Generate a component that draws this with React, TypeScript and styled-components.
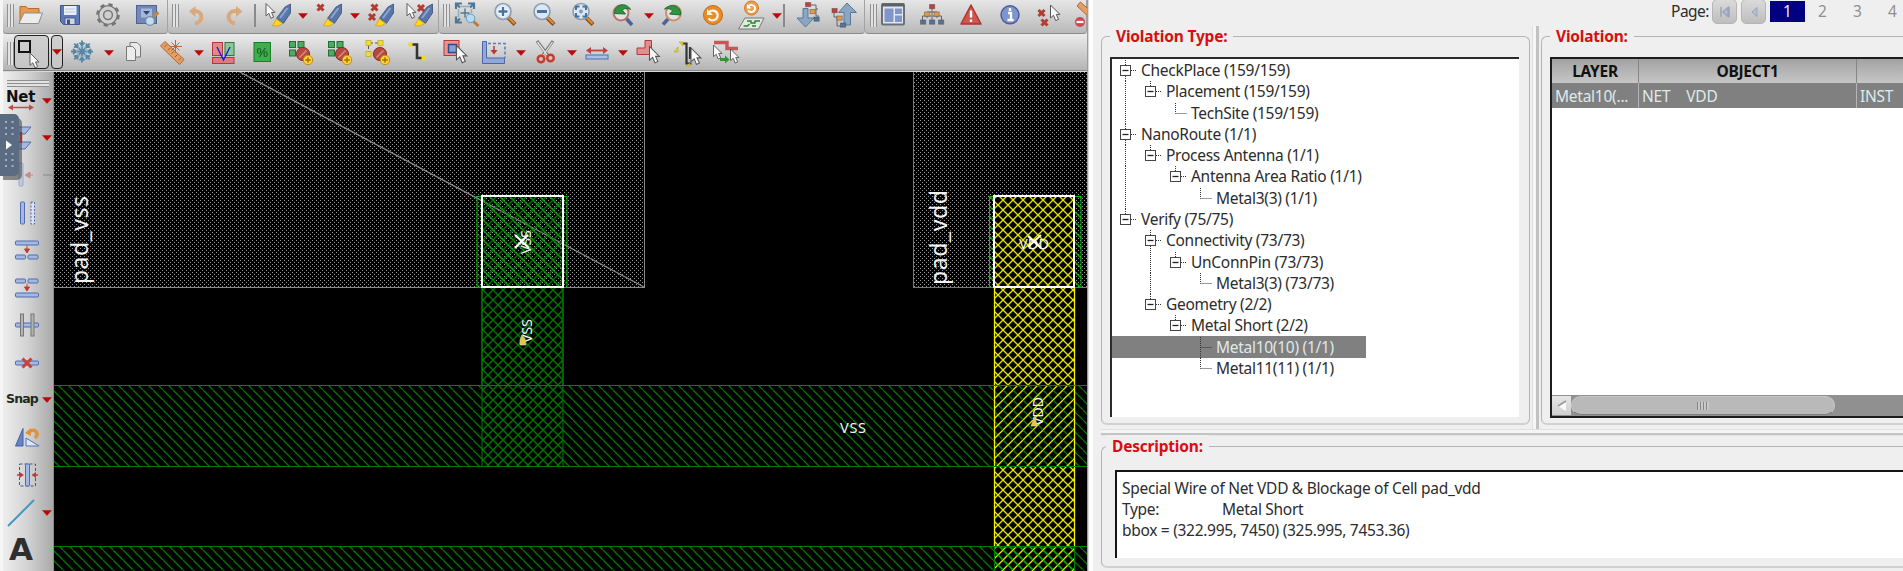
import React from "react";
import styled, { createGlobalStyle } from "styled-components";

const Global = createGlobalStyle`
  *, *::before, *::after { box-sizing: border-box; }
  body { margin: 0; background: #efefef; overflow: hidden; font-family: "Noto Sans", "Open Sans", sans-serif; font-size: 16px; color: #2c2c2c; }
  svg { display: block; overflow: visible; flex: none; }
`;

const Window = styled.div`
  display: flex;
  width: 1903px;
  height: 571px;
  overflow: hidden;
`;
const Editor = styled.div`
  position: relative;
  display: flex;
  flex: none;
  flex-direction: column;
  width: 1087px;
  height: 571px;
  padding-left: 3px;
  overflow: hidden;
  background: #f6f6f6;
`;
const ToolRow = styled.div<{ $h: number }>`
  display: flex;
  flex: none;
  height: ${(p) => p.$h}px;
  background: #d8d8d8;
`;
const ToolGroup = styled.div<{ $w: number; $pad?: number }>`
  display: flex;
  flex: none;
  align-items: flex-start;
  width: ${(p) => p.$w}px;
  height: 34px;
  padding: 1px 0 0 ${(p) => p.$pad ?? 4}px;
  background: linear-gradient(#e6e6e6, #d2d2d2 45%, #b9b9b9);
  border-bottom: 1px solid #8b8b8b;
  border-right: 1px solid #a2a2a2;
  border-radius: 0 0 4px 4px;
`;
const ToolBand = styled.div`
  display: flex;
  width: 1084px;
  height: 37px;
  padding: 4px 0 0 4px;
  background: linear-gradient(#ebebeb, #d6d6d6 40%, #b4b4b4);
  border-bottom: 1px solid #8a8a8a;
`;
const Handle = styled.div<{ $top: number }>`
  flex: none;
  width: 7px;
  height: 23px;
  margin-top: ${(p) => p.$top}px;
  background: repeating-linear-gradient(90deg, #919191 0 1px, #e3e3e3 1px 3px);
`;
const Slot = styled.div<{ $gap: number; $w?: number; $top?: number }>`
  flex: none;
  width: ${(p) => p.$w ?? 28}px;
  margin-left: ${(p) => p.$gap}px;
  margin-top: ${(p) => p.$top ?? 0}px;
`;
const Divider = styled.div<{ $gap: number }>`
  width: 2px;
  height: 23px;
  margin: 3px 0 0 ${(p) => p.$gap}px;
  background: #8a8a8a;
`;
const PressedButton = styled.div<{ $w: number; $gap?: number }>`
  display: flex;
  align-items: center;
  justify-content: center;
  flex: none;
  width: ${(p) => p.$w}px;
  height: 34px;
  margin: -3px 0 0 ${(p) => p.$gap ?? 0}px;
  border: 1px solid #222;
  border-radius: 4px;
  background: linear-gradient(#cfcfcf, #c6c6c6);
`;
const Body = styled.div`
  display: flex;
  flex: 1;
`;
const SideBar = styled.div`
  display: flex;
  flex: none;
  flex-direction: column;
  width: 51px;
  padding: 8px 0 0 4px;
  background: linear-gradient(90deg, #eeeeee, #d2d2d2 50%, #a9a9a9);
  border-right: 1px solid #8d8d8d;
`;
const SideHandle = styled.div`
  width: 42px;
  height: 7px;
  background: repeating-linear-gradient(#8f8f8f 0 1px, #e3e3e3 1px 3px);
`;
const SideItem = styled.div<{ $h: number }>`
  display: flex;
  align-items: center;
  justify-content: space-between;
  flex: none;
  width: 45px;
  height: ${(p) => p.$h}px;
`;
const SnapLabel = styled.span`
  font: bold 12.5px/1 "DejaVu Sans", sans-serif;
  letter-spacing: -0.85px;
  margin-left: -1px;
  color: #1d2a1d;
`;
const NetBlock = styled.div`
  font: bold 15px/13px "DejaVu Sans", sans-serif;
  letter-spacing: -0.2px;
  margin-left: -1px;
  color: #111;
`;
const LetterA = styled.span`
  font: bold 31px/28px "DejaVu Sans", sans-serif;
  color: #2e2e2e;
  margin: -3px 0 0 2px;
`;
const PullTab = styled.div`
  position: absolute;
  left: 0;
  top: 114px;
  width: 19px;
  height: 62px;
  border-radius: 0 5px 5px 0;
  background: #5a6b82;
  box-shadow: 3px 4px 0 rgba(70, 70, 70, 0.6);
`;

const Side = styled.div`
  display: flex;
  flex-direction: column;
  flex: 1;
  min-width: 0;
  border-left: 1px solid #9c9c9c;
  background: linear-gradient(90deg, #d9d9d9 0 1px, #fdfdfd 1px 5px, #efefef 5px);
  padding-left: 13px;
`;
const Pager = styled.div`
  display: flex;
  flex: none;
  height: 26px;
  padding-left: 570px;
  font-size: 15.5px;
  color: #8b8b8b;
`;
const PagerLabel = styled.span`
  flex: none;
  width: 41px;
  line-height: 23px;
  letter-spacing: -0.5px;
  color: #2c2c2c;
`;
const PagerButton = styled.div`
  display: flex;
  align-items: center;
  justify-content: center;
  flex: none;
  width: 25px;
  height: 25px;
  margin: -1px 4px 0 0;
  border: 1px solid #b5b5b5;
  border-radius: 5px;
  background: linear-gradient(#dadada, #bebebe);
`;
const PageNo = styled.span<{ $on?: boolean }>`
  width: 35px;
  height: 21px;
  margin-top: 1px;
  flex: none;
  line-height: 21px;
  text-align: center;
  color: ${(p) => (p.$on ? "#e8eef4" : "#8f8f8f")};
  background: ${(p) => (p.$on ? "#000080" : "transparent")};
`;
const Columns = styled.div`
  display: flex;
  flex: none;
  height: 403px;
`;
const Group = styled.section<{ $w?: number; $h: number; $pad: string; $open?: boolean }>`
  position: relative;
  flex: none;
  width: ${(p) => (p.$w ? `${p.$w}px` : "auto")};
  height: ${(p) => p.$h}px;
  margin-top: 10px;
  padding: ${(p) => p.$pad};
  border: 1px solid #b4b4b4;
  border-bottom: 2px solid #d0d0d0;
  border-right-width: ${(p) => (p.$open ? 0 : 1)}px;
  border-radius: ${(p) => (p.$open ? "6px 0 0 6px" : "6px")};
`;
const GroupTitle = styled.h2<{ $left: number }>`
  position: absolute;
  left: ${(p) => p.$left}px;
  top: -12px;
  margin: 0;
  padding: 0 6px;
  font-size: 15.5px;
  line-height: 23px;
  font-weight: 700;
  letter-spacing: -0.2px;
  white-space: nowrap;
  color: #d60e12;
  background: #efefef;
`;
const VSplit = styled.div`
  flex: none;
  width: 11px;
  background: linear-gradient(90deg, #efefef 0 2px, #e0e0e0 2px 3px, #f6f6f6 3px 6px, #c2c2c2 6px 9px, #efefef 9px);
`;
const HSplit = styled.div`
  flex: none;
  height: 7px;
  background: linear-gradient(#e0e0e0 0 1px, #f5f5f5 1px 4px, #c4c4c4 4px 6px, #e4e4e4 6px);
`;
const Tree = styled.div`
  width: 409px;
  height: 360px;
  padding-top: 1px;
  border-top: 2px solid #2b2b2b;
  border-left: 2px solid #2b2b2b;
  background: #fff;
`;
const TreeRow = styled.div<{ $on?: boolean }>`
  display: flex;
  align-items: center;
  width: 254px;
  height: 21.27px;
  padding-left: 1px;
  color: ${(p) => (p.$on ? "#deeaea" : "#2c2c2c")};
  background: ${(p) => (p.$on ? "#808080" : "transparent")};
`;
const TreeText = styled.span`
  margin-left: 3px;
  line-height: 21px;
  font-size: 15.5px;
  letter-spacing: -0.28px;
  white-space: nowrap;
`;
const Table = styled.div`
  display: flex;
  flex-direction: column;
  height: 361px;
  border: 2px solid #1c1c1c;
  border-right: 0;
  background: #fff;
  overflow: hidden;
`;
const HeaderRow = styled.div`
  display: flex;
  height: 24px;
  background: linear-gradient(#a2a2a2, #c6c6c6);
`;
const HeaderCell = styled.div<{ $w: number }>`
  flex: none;
  width: ${(p) => p.$w}px;
  height: 24px;
  text-align: center;
  font-size: 15.5px;
  font-weight: 700;
  letter-spacing: -0.3px;
  line-height: 24px;
  color: #111;
  border-right: 1px solid #858585;
`;
const DataRow = styled.div`
  display: flex;
  height: 25px;
  background: #808080;
`;
const DataCell = styled.div<{ $w: number }>`
  flex: none;
  display: flex;
  gap: 16px;
  width: ${(p) => p.$w}px;
  padding-left: 3px;
  overflow: hidden;
  white-space: nowrap;
  font-size: 15.5px;
  letter-spacing: -0.25px;
  line-height: 26px;
  color: #deeaea;
  border-right: 1px solid #b5b5b5;
`;
const ScrollBar = styled.div`
  display: flex;
  margin-top: auto;
  height: 21px;
  padding-top: 1px;
  background: #909090;
`;
const ScrollButton = styled.div`
  display: flex;
  flex: none;
  align-items: center;
  justify-content: center;
  width: 19px;
  height: 19px;
  background: linear-gradient(#e6e6e6, #cfcfcf);
`;
const Thumb = styled.div`
  display: flex;
  flex: none;
  align-items: center;
  justify-content: center;
  width: 264px;
  height: 19px;
  border: 1px solid #c6c6c6;
  border-bottom-color: #7e7e7e;
  border-radius: 10px;
  background: #b9b9b9;
`;
const Grip = styled.div`
  width: 12px;
  height: 8px;
  background: repeating-linear-gradient(90deg, #868686 0 1px, #c9c9c9 1px 3px);
`;
const Report = styled.div`
  display: grid;
  grid-template-columns: 100px 1fr;
  align-content: start;
  height: 88px;
  padding: 6px 0 0 5px;
  border-top: 2px solid #141414;
  border-left: 2px solid #141414;
  background: #fff;
  font-size: 15.5px;
  letter-spacing: -0.3px;
  line-height: 21.2px;
  white-space: nowrap;
`;
const Wide = styled.div`
  grid-column: 1 / 3;
`;

/* ---------- toolbar glyphs ---------- */

const Icon = ({ children, w = 28, h = 28 }: { children: React.ReactNode; w?: number; h?: number }) => (
  <svg width={w} height={h} viewBox={`0 0 ${w} ${h}`} fill="none">{children}</svg>
);
const Caret = () => <Icon w={10} h={6}><path d="M0.5 0.5h9L5 5.5z" fill="#c80000" stroke="#8f1010" strokeWidth=".4" /></Icon>;
const Cursor = ({ x, y, s = 1 }: { x: number; y: number; s?: number }) => (
  <path transform={`translate(${x} ${y}) scale(${s})`} d="M0 0V13L3 10.3 5.2 15.6 8 14.3 5.8 9.4H9.4z" fill="#fafafa" stroke="#555" strokeWidth="1" />
);
const Cross = ({ x, y, r = 3 }: { x: number; y: number; r?: number }) => (
  <path d={`M${x - r} ${y - r}L${x + r} ${y + r}M${x + r} ${y - r}L${x - r} ${y + r}`} stroke="#b23c32" strokeWidth="3" />
);
const Pen = () => (
  <g>
    <path d="M26.5 3V12L19.5 22.3 12.5 17.3 21 6z" fill="#5876a8" stroke="#3a4f78" strokeWidth=".8" />
    <path d="M23.5 7L16 17" stroke="#8ba7cf" strokeWidth="2" />
    <path d="M12.5 18L18.5 22.6 14 25 8.5 24.7z" fill="#ffd91a" stroke="#d79a10" strokeWidth=".8" />
  </g>
);
const Lens = ({ children }: { children?: React.ReactNode }) => (
  <g>
    <path d="M16.5 16L24 23.5" stroke="#8d4d12" strokeWidth="4" />
    <path d="M17 16L23.5 22.5" stroke="#de9038" strokeWidth="2" />
    <circle cx="12" cy="10.5" r="8" fill="#dbe7f2" stroke="#8d9eb0" strokeWidth="1.6" />
    {children}
  </g>
);
const Forbid = ({ x, y }: { x: number; y: number }) => (
  <g>
    <circle cx={x} cy={y} r="6.6" fill="#b5493f" stroke="#87302a" />
    <path d={`M${x - 3.5} ${y + 3.5}L${x + 3.5} ${y - 3.5}`} stroke="#d98a80" strokeWidth="1.6" />
    <circle cx={x + 5} cy={y + 6} r="4.7" fill="#ffd43a" stroke="#c58a10" />
    <path d={`M${x + 2.2} ${y + 6}h5.6M${x + 5} ${y + 3.2}v5.6`} stroke="#a86a00" strokeWidth="1.4" />
  </g>
);
const GreenTiles = () => (
  <g fill="#4faa62" stroke="#1f7035" strokeWidth="1">
    <rect x="2.5" y="3.5" width="6" height="6" /><rect x="11" y="3.5" width="6" height="6" />
    <rect x="2.5" y="12" width="6" height="6" />
  </g>
);
const Nodes = ({ pts }: { pts: [number, number, string][] }) => (
  <g>{pts.map(([x, y, c], i) => <rect key={i} x={x} y={y} width="5.2" height="4.2" fill={c} stroke="#444" strokeOpacity=".45" strokeWidth="1" />)}</g>
);
const Ruler = () => (
  <g>
    <path d="M2.5 8L7 3.5 26 21.5 21.5 26.5z" fill="#e2a067" stroke="#b5662a" />
    <path d="M6.5 9l2.5-2.5M10 12.3l2.3-2.3M13.5 15.7l2.3-2.3M17 19l2.3-2.3M20.4 22.4l2.3-2.3" stroke="#a0521c" />
  </g>
);

const Folder = () => <Icon>
  <path d="M4 22V5.5h6l2 2h11V12" fill="#e69a4f" stroke="#b86a26" />
  <path d="M3 22.5L8 12h18.5L22.5 22.5z" fill="#ececec" stroke="#8e8e8e" />
</Icon>;
const Save = () => <Icon>
  <path d="M4.5 4.5h19v19h-16l-3-3z" fill="#5c79b8" stroke="#3e5488" />
  <rect x="8" y="5" width="12.5" height="9" fill="#eaf0f8" /><path d="M9 8h10M9 11h10" stroke="#b9c6da" />
  <rect x="9" y="17" width="10" height="6.5" fill="#cfd6e2" stroke="#41547e" strokeWidth=".8" /><rect x="11" y="18.5" width="3" height="5" fill="#3e5488" />
</Icon>;
const Gear = () => <Icon>
  <circle cx="14" cy="14" r="9.8" stroke="#747474" strokeWidth="4" strokeDasharray="4 3.7" />
  <circle cx="14" cy="14" r="6.8" stroke="#d2d2d2" strokeWidth="5" /><circle cx="14" cy="14" r="9.3" stroke="#777" strokeWidth="1.3" />
  <circle cx="14" cy="14" r="4.4" stroke="#777" strokeWidth="1.5" fill="#cfcfcf" />
</Icon>;
const DesignBrowser = () => <Icon>
  <rect x="3.5" y="4.5" width="20" height="18" fill="#7188b8" stroke="#50648f" /><rect x="8" y="7.5" width="11" height="9" fill="#a6b8da" />
  <path d="M10 10l3.500 4 3.500-4z" fill="#2f4475" /><path d="M20 15.500l5.500-4" stroke="#c3853a" strokeWidth="3" />
  <circle cx="17" cy="20" r="4.400" fill="#c4dcee" stroke="#6f8fae" strokeWidth="1.300" />
</Icon>;
const Undo = () => <Icon><path d="M12 22.500c8-1 9-12 0-12.500H8" stroke="#d9a97c" strokeWidth="4" /><path d="M6 10.500L12.500 5v11z" fill="#d9a97c" /></Icon>;
const Redo = () => <Icon><path d="M14 22.500c-8-1-9-12 0-12.500H19" stroke="#d9a97c" strokeWidth="4" /><path d="M21.500 10.500L15 5v11z" fill="#d9a97c" /></Icon>;
const CursorPen = () => <Icon><Pen /><Cursor x={2} y={2.500} s={0.95} /></Icon>;
const CrossPen = () => <Icon><Pen /><Cross x={5.500} y={6.500} /></Icon>;
const CrossesPen = () => <Icon><Pen /><Cross x={7.500} y={6.500} /><Cross x={5} y={16} /></Icon>;
const CursorCrossPen = () => <Icon><Pen /><Cross x={15} y={7} /><Cursor x={1} y={2.500} s={0.95} /></Icon>;
const FitAll = () => <Icon>
  <path d="M3 8V2.500h6M15 2.500h6V8M3 15.500V21.500h6M3 2.500l4 4M21 2.500l-4 4M3 21.500l4-4" stroke="#4c7795" strokeWidth="2.200" />
  <path d="M8 5.500h8M5.500 8v8M18.500 8v4" stroke="#8eabc0" strokeWidth="1.500" />
  <path d="M12 7.500v9M7.500 12h9" stroke="#4c7795" strokeWidth="1.400" />
  <path d="M20.500 20.500l5 4.500" stroke="#c07a30" strokeWidth="3" /><circle cx="17.500" cy="17.300" r="4.300" fill="#b6dcf4" stroke="#6a98bb" />
</Icon>;
const ZoomIn = () => <Icon><Lens><path d="M12 5.500v10M7 10.500h10" stroke="#fff" strokeWidth="4.600" /><path d="M12 6v9M7.500 10.500h9" stroke="#4772a0" strokeWidth="2.400" /></Lens></Icon>;
const ZoomOut = () => <Icon><Lens><path d="M7 10.500h10" stroke="#4772a0" strokeWidth="3" /></Lens></Icon>;
const ZoomFit = () => <Icon><Lens><path d="M7 9V5.500h3.500M13.500 5.500H17V9M7 12v3.500h3.500M13.500 15.500H17V12" stroke="#4772a0" strokeWidth="2" /><circle cx="12" cy="10.500" r="2" fill="#7d9ebe" /></Lens></Icon>;
const ZoomPrev = () => <Icon>
  <path d="M16 16L23 24" stroke="#4a6597" strokeWidth="3.500" /><circle cx="12" cy="12" r="7.500" fill="#e6dfe4" stroke="#b77868" strokeWidth="2" />
  <path d="M5.500 12.500c0-10 12-11.500 16-4-4-2-7-1-8 1l3 3.500z" fill="#2f9442" stroke="#1d6e2d" />
</Icon>;
const ZoomNext = () => <Icon>
  <path d="M10 17L4 23.500" stroke="#4a6597" strokeWidth="3.500" /><circle cx="14.500" cy="12" r="7.500" fill="#e6dfe4" stroke="#c9936a" strokeWidth="2" />
  <path d="M21.500 14c1-10-10-12-16-6 4-1 7 0 8 2l-3 3z" fill="#2f9442" stroke="#1d6e2d" />
</Icon>;
const Refresh = () => <Icon><circle cx="14" cy="14" r="9.500" fill="#e98c25" stroke="#c46b12" /><path d="M9.500 17.500c4 4 10 1 9-4.500-1.500-4-6-4-8.500-2" stroke="#fff2df" strokeWidth="2.300" /><path d="M8 8v6h6z" fill="#fff2df" /></Icon>;
const Redraw = () => <Icon>
  <path d="M8 17H27L21.500 28H1.500z" fill="#e5e8e5" stroke="#777" /><path d="M10 20h4v2h4v-2h5M6.500 25h4l2-2M15 25h4" stroke="#24852f" strokeWidth="1.400" />
  <circle cx="14.500" cy="7" r="7" fill="#eba04c" stroke="#cb792a" /><path d="M11 9.500c3 3 7.500 1 7-3-1-3-4.500-3-6.500-1.500" stroke="#fff" strokeWidth="1.800" /><path d="M10 3v4.500h4.500z" fill="#fff" />
</Icon>;
const HierDown = () => <Icon>
  <path d="M17 4h5v11h3M22 8h2" stroke="#666" /><path d="M9 7.500h5V17h6L11.500 26 3 17h6z" fill="#8aa6c4" stroke="#5a7896" />
  <Nodes pts={[[11.500, 1.500, "#c33d3d"], [16, 8.500, "#e79a45"], [20, 16, "#4f759c"]]} />
</Icon>;
const HierUp = () => <Icon>
  <path d="M4 10v6h4M7 16v9h4" stroke="#666" /><path d="M14 24.500V12H8.500L17 2.500 26.500 12h-6v12.500z" transform="translate(0,-.5)" fill="#8aa6c4" stroke="#5a7896" />
  <Nodes pts={[[2, 7.500, "#c33d3d"], [7, 15, "#e79a45"], [10.500, 22, "#4f759c"]]} />
</Icon>;
const Layout = () => <Icon>
  <rect x="3" y="3" width="22" height="20.500" rx="1" fill="#e4e6ea" stroke="#68717b" strokeWidth="2" /><path d="M3 4h22" stroke="#5a636d" strokeWidth="3" />
  <rect x="5.500" y="7.500" width="9" height="13.500" fill="#8095c9" /><rect x="16" y="7.500" width="7" height="5.500" fill="#8095c9" /><rect x="16" y="14.500" width="7" height="6.500" fill="#8095c9" />
</Icon>;
const TreeIcon = () => <Icon>
  <path d="M14 6v14M9 17v-6h10v6M4.500 20v-5h9M23.500 20v-5h-9" stroke="#666" />
  <Nodes pts={[[11.500, 3.500, "#c33d3d"], [6.500, 11, "#e79a45"], [16, 11, "#e79a45"], [2.500, 19, "#4f759c"], [11.500, 19, "#4f759c"], [20.500, 19, "#4f759c"]]} />
</Icon>;
const Warn = () => <Icon><path d="M14 4L24 23H4z" fill="#cf5550" stroke="#a93630" strokeWidth="1.500" strokeLinejoin="round" /><path d="M14 9.500v7M14 18.500v2.500" stroke="#fff" strokeWidth="2.400" /></Icon>;
const Info = () => <Icon><circle cx="14" cy="13.800" r="9" fill="#7f95cf" stroke="#4a5c9c" strokeWidth="1.500" /><path d="M14 7v3M12 12h3v7M11.500 19h6" stroke="#fff" strokeWidth="2.300" /></Icon>;
const ClearSel = () => <Icon><Cross x={6.500} y={12} /><Cross x={9.500} y={21.500} /><Cursor x={15.500} y={4} s={1} /></Icon>;
const RulerMinus = () => <Icon><path d="M10 5l3.500-4 12 11-3.500 4z" fill="#e2a067" stroke="#b5662a" /><circle cx="13" cy="21" r="5" fill="#cf4a50" /><path d="M9.500 21h7" stroke="#fff" strokeWidth="2.200" /></Icon>;

const SelectIcon = () => <Icon w={33} h={32}><rect x="4" y="5" width="11" height="11" stroke="#111" strokeWidth="2" /><Cursor x={15} y={17} s={0.95} /></Icon>;
const Snowflake = () => <Icon>
  <g stroke="#5684a5" strokeWidth="1.800">{[0, 45, 90, 135].map((a) => <path key={a} transform={`rotate(${a} 14 13.500)`} d="M14 2.500v22M11.500 4.500l2.500 3 2.500-3M11.500 22.500l2.500-3 2.500 3" />)}</g>
  <circle cx="14" cy="13.500" r="5" stroke="#8db0c8" strokeWidth="1.200" />
</Icon>;
const Copy = () => <Icon><path d="M10 4.500h7l3.500 3.500v11H10z" fill="#e9e9e9" stroke="#777" /><path d="M6.500 8.500h6l3 3v11h-9z" fill="#ececec" stroke="#777" /></Icon>;
const RulerStar = () => <Icon><Ruler /><path d="M17.500 2v13M12 8.500h12M13.500 4.500l8 8M21.500 4.500l-8 8" stroke="#b96a34" /></Icon>;
const ColorPanels = () => <Icon>
  <rect x="3.500" y="4.500" width="10" height="13" fill="#e0898c" stroke="#b0383c" /><rect x="16" y="4.500" width="9" height="13" fill="#8cc79a" stroke="#287a3d" /><rect x="3.500" y="19.500" width="21.500" height="6" fill="#db7c80" stroke="#b0383c" />
  <path d="M8 9l6.500 13L21 9" stroke="#1616d6" strokeWidth="1.300" />
</Icon>;
const PercentIcon = () => <Icon><rect x="6" y="4.500" width="16.500" height="19" fill="#3fae4c" stroke="#1b7c2a" /><text x="14.200" y="19" textAnchor="middle" fontSize="13" fontFamily="Liberation Sans" fill="#0f4f1c">%</text></Icon>;
const TilesForbid = () => <Icon><GreenTiles /><Forbid x={16} y={16} /></Icon>;
const PinsForbid = () => <Icon><path d="M5 5h14M4.500 7v10" stroke="#555" strokeDasharray="4 2" /><g fill="#f3dc3a" stroke="#b39a1c" strokeWidth=".6"><rect x="2" y="2.500" width="5" height="5" /><rect x="14" y="2.500" width="5" height="5" /><rect x="2" y="13.500" width="5" height="5" /></g><Forbid x={16} y={16} /></Icon>;
const Wire = () => <Icon><path d="M7 6.500h7V20h8" stroke="#333" strokeWidth="2.600" /><rect x="5.500" y="4.500" width="4" height="4" fill="#f1d91d" /><rect x="18.500" y="18" width="4.500" height="4.500" fill="#f1d91d" /></Icon>;
const SelectRect = () => <Icon><rect x="3" y="2.500" width="15" height="15" fill="#e79494" stroke="#b5373a" /><rect x="7.500" y="6.500" width="8" height="8" fill="#85a0d5" stroke="#2b4a8d" strokeWidth="1.500" /><Cursor x={15.500} y={7.500} s={1.100} /></Icon>;
const Reshape = () => <Icon><path d="M8 5.500h17V20" stroke="#5d78b6" strokeWidth="1.500" strokeDasharray="3 2" /><path d="M2.500 3.500h4v16.500h18V25.500h-22z" fill="#91a9da" stroke="#4b67a8" /><path d="M14 8v7" stroke="#bc3434" strokeWidth="1.500" /><path d="M10.500 12h7L14 16.500z" fill="#bc3434" /></Icon>;
const Scissors = () => <Icon><path d="M5 3l10.500 14M21 3L11 17" stroke="#777" strokeWidth="3" /><path d="M5.500 4l9.500 13M20.500 4L11.500 17" stroke="#e4e4e4" strokeWidth="1.300" /><circle cx="9" cy="21" r="3.300" stroke="#c83a2c" strokeWidth="2.400" /><circle cx="18.500" cy="20" r="3.300" stroke="#c83a2c" strokeWidth="2.400" /></Icon>;
const Stretch = () => <Icon><path d="M6 12.500h16" stroke="#bc4242" strokeWidth="1.800" /><path d="M3 12.500L8 9v7zM25 12.500L20 9v7z" fill="#bc4242" /><rect x="3" y="17" width="22" height="4" fill="#a9c0ea" stroke="#4a6db4" /></Icon>;
const SelPoly = () => <Icon><path d="M11 2.500h6.500v14H3v-6.500h8z" fill="#e38e8e" stroke="#b5373a" /><Cursor x={15.500} y={8.500} s={1.050} /></Icon>;
const SelWire = () => <Icon><path d="M8 5.500h4.500v20h5M11 5.500M16 9v11h4" stroke="#333" strokeWidth="2.200" /><path d="M0 14l4-5v5zM5 4h4v4zM12 28h4v-3z" fill="#e8d820" stroke="#b19f14" strokeWidth=".6" /><Cursor x={17} y={10} s={1.050} /></Icon>;
const SelChain = () => <Icon><path d="M2 4.500h13v6h11" stroke="#c65858" strokeWidth="3.500" /><Cursor x={1.500} y={7} s={0.900} /><Cursor x={18.500} y={11} s={0.900} /><path d="M8 20h5v-2.500l4.500 4-4.500 4V23H8z" fill="#30962f" /></Icon>;

/* ---------- side glyphs ---------- */
const Bar = ({ x, y, w, h, o = 1 }: { x: number; y: number; w: number; h: number; o?: number }) => (
  <rect x={x} y={y} width={w} height={h} rx="1" fill="#a3b8e2" stroke="#4f6db0" opacity={o} />
);
const DownArrow = ({ y }: { y: number }) => <path d={`M17.500 ${y}h5l-2.500 4zM20 ${y - 3.5}v5`} fill="#bd3a34" stroke="#bd3a34" />;
const SideIcon = ({ children }: { children: React.ReactNode }) => <Icon w={34} h={28}>{children}</Icon>;

const NetArrow = () => <Icon w={28} h={7}><path d="M4 3.500h20" stroke="#c24a4a" strokeWidth="1.500" /><path d="M1 3.500L6 .5v6zM27 3.500L22 .5v6z" fill="#c24a4a" /></Icon>;

type Item = ["i", number, () => React.ReactElement] | ["c", number] | ["d", number];
const groups: { w: number; pad?: number; items: Item[] }[] = [
  { w: 165, items: [["i", 2, Folder], ["i", 12, Save], ["i", 10, Gear], ["i", 11, DesignBrowser]] },
  { w: 271, items: [["i", 4, Undo], ["i", 10, Redo], ["d", 5], ["i", 8, CursorPen], ["c", 6], ["i", 7, CrossPen], ["c", 7], ["i", 7, CrossesPen], ["i", 11, CursorCrossPen]] },
  { w: 426, items: [["i", 3, FitAll], ["i", 10, ZoomIn], ["i", 11, ZoomOut], ["i", 11, ZoomFit], ["i", 12, ZoomPrev], ["c", 7], ["i", 5, ZoomNext], ["i", 12, Refresh], ["i", 10, Redraw], ["c", 7], ["d", 1], ["i", 9, HierDown], ["i", 8, HierUp]] },
  { w: 222, pad: 5, items: [["i", 2, Layout], ["i", 11, TreeIcon], ["i", 11, Warn], ["i", 11, Info], ["i", 11, ClearSel], ["i", 4, RulerMinus]] },
];
const editItems: Item[] = [
  ["i", 5, Snowflake], ["c", 8], ["i", 6, Copy], ["i", 10, RulerStar], ["c", 8], ["i", 5, ColorPanels], ["i", 11, PercentIcon],
  ["i", 11, TilesForbid], ["i", 11, TilesForbid], ["i", 10, PinsForbid], ["i", 11, Wire], ["i", 10, SelectRect], ["i", 11, Reshape],
  ["c", 8], ["i", 6, Scissors], ["c", 7], ["i", 6, Stretch], ["c", 7], ["i", 6, SelPoly], ["i", 12, SelWire], ["i", 10, SelChain],
];
const Items = ({ items }: { items: Item[] }) => (
  <>
    {items.map((it, i) => {
      if (it[0] === "d") return <Divider key={i} $gap={it[1]} />;
      if (it[0] === "c") return <Slot key={i} $gap={it[1]} $w={10} $top={12}><Caret /></Slot>;
      const Glyph = it[2];
      return <Slot key={i} $gap={it[1]}><Glyph /></Slot>;
    })}
  </>
);

/* ---------- layout canvas ---------- */
const CanvasSvg = styled.svg`
  && { overflow: hidden; }
  text { font-family: "Noto Sans", sans-serif; fill: #f2f2f2; }
`;
const Canvas = () => (
  <CanvasSvg width="1033" height="499" viewBox="54 72 1033 499">
    <defs>
      <pattern id="dots" width="4" height="4" patternUnits="userSpaceOnUse">
        <rect width="1" height="1" fill="#9a9a9a" /><rect x="2" y="2" width="1" height="1" fill="#9a9a9a" />
      </pattern>
      {[["gd", "#007800"], ["yd", "#e2e200"], ["bd", "#00b000"]].map(([id, c]) => (
        <pattern key={id} id={id} width="10" height="10" x="3" patternUnits="userSpaceOnUse">
          <path d="M-1 -1L11 11" stroke={c} strokeWidth="1.300" />
        </pattern>
      ))}
      {[["gu", "#007800"], ["yu", "#e2e200"]].map(([id, c]) => (
        <pattern key={id} id={id} width="10" height="10" x="3" patternUnits="userSpaceOnUse">
          <path d="M-1 11L11 -1" stroke={c} strokeWidth="1.300" />
        </pattern>
      ))}
    </defs>
    <rect x="54" y="72" width="1033" height="499" fill="#000" />
    <rect x="40" y="60" width="604.500" height="227.500" fill="url(#dots)" stroke="#8a8a8a" />
    <rect x="913.500" y="60" width="190" height="227.500" fill="url(#dots)" stroke="#777" />
    <path d="M238 71L644 287" stroke="#8c8c8c" strokeWidth="1.200" />
    <g stroke="#008000">
      <rect x="40" y="385.500" width="1060" height="81" fill="url(#gd)" />
      <rect x="40" y="546.500" width="1060" height="60" fill="url(#gd)" />
      <rect x="482" y="196" width="81" height="270.500" fill="url(#gu)" />
      <rect x="482" y="196" width="81" height="189.500" fill="url(#gd)" />
    </g>
    <g stroke="#00c000">
      <rect x="477" y="196.500" width="90" height="91" fill="url(#bd)" fillOpacity=".5" />
      <rect x="989.500" y="196.500" width="91.500" height="91" fill="url(#bd)" />
    </g>
    <rect x="994.500" y="196" width="80" height="189.500" fill="#000" />
    <rect x="994.500" y="196" width="80" height="189.500" fill="url(#yd)" />
    <rect x="994.500" y="467" width="80" height="79" fill="url(#yd)" />
    <rect x="994.500" y="196" width="80" height="400" fill="url(#yu)" />
    <rect x="994.500" y="547" width="80" height="40" fill="url(#bd)" stroke="#008000" />
    <path d="M994.500 288V546M1074.500 288V546" stroke="#f4f400" strokeWidth="1.300" />
    <path d="M994 385.500h81M994 466.500h81M994 546.500h81" stroke="#008000" />
    <rect x="482" y="196" width="81" height="91" stroke="#fff" strokeWidth="2" fill="none" />
    <rect x="994" y="196" width="80" height="91" stroke="#fff" strokeWidth="2" fill="none" />
    <text transform="translate(88 284) rotate(-90)" fontSize="23" textLength="88">pad_vss</text>
    <text transform="translate(947 285) rotate(-90)" fontSize="23" textLength="95">pad_vdd</text>
    <g fontSize="14.500">
      <text transform="translate(531 254) rotate(-90)" textLength="24">VSS</text>
      <text transform="translate(532 343) rotate(-90)" textLength="24">VSS</text>
      <text transform="translate(1043 426) rotate(-90)" textLength="29">VDD</text>
      <text x="1019" y="248.500" textLength="30">VDD</text>
      <text x="840" y="433" textLength="26">VSS</text>
    </g>
    <path d="M515 235l14 13M528 235l-13 13M1028 236l13 12M1041 235l-13 12" stroke="#fff" strokeWidth="2" />
    <path d="M520 345v-5l2-5 3 4 1 6zM1031 426l4-10 2 10z" fill="#e8c83a" stroke="#ccc" strokeWidth=".7" />
  </CanvasSvg>
);

/* ---------- violation tree ---------- */
type Node = { text: string; guides: string; box?: boolean; down?: boolean; on?: boolean };
const nodes: Node[] = [
  { text: "CheckPlace (159/159)", guides: "", box: true, down: true },
  { text: "Placement (159/159)", guides: "|", box: true },
  { text: "TechSite (159/159)", guides: "| " },
  { text: "NanoRoute (1/1)", guides: "", box: true, down: true },
  { text: "Process Antenna (1/1)", guides: "|", box: true },
  { text: "Antenna Area Ratio (1/1)", guides: "| ", box: true },
  { text: "Metal3(3) (1/1)", guides: "|  " },
  { text: "Verify (75/75)", guides: "", box: true },
  { text: "Connectivity (73/73)", guides: " ", box: true, down: true },
  { text: "UnConnPin (73/73)", guides: " |", box: true },
  { text: "Metal3(3) (73/73)", guides: " | " },
  { text: "Geometry (2/2)", guides: " ", box: true },
  { text: "Metal Short (2/2)", guides: "  ", box: true },
  { text: "Metal10(10) (1/1)", guides: "   ", down: true, on: true },
  { text: "Metal11(11) (1/1)", guides: "   " },
];
const Branch = ({ d, box }: { d: string; box?: boolean }) => (
  <svg width="25" height="21" viewBox="0 0 25 21" fill="none">
    <path d={d} stroke="#333" strokeDasharray="1 1" />
    {box && <><rect x="7.500" y="5.500" width="10" height="10" fill="#fff" stroke="#444" /><path d="M9.500 10.500h6" stroke="#222" strokeWidth="1.300" /></>}
  </svg>
);

export default function App() {
  return (
    <Window>
      <Global />
      <Editor>
        <ToolRow $h={34}>
          {groups.map((g, i) => (
            <ToolGroup key={i} $w={g.w} $pad={g.pad}>
              <Handle $top={3} />
              <Items items={g.items} />
            </ToolGroup>
          ))}
        </ToolRow>
        <ToolRow $h={38}>
          <ToolBand>
            <Handle $top={4} />
            <PressedButton $w={35}><SelectIcon /></PressedButton>
            <PressedButton $w={12} $gap={2}><Caret /></PressedButton>
            <Items items={editItems} />
          </ToolBand>
        </ToolRow>
        <Body>
          <SideBar>
            <SideHandle />
            <SideItem $h={28}><div><NetBlock>Net</NetBlock><NetArrow /></div><Caret /></SideItem>
            <SideItem $h={46}><SideIcon><path d="M4 3h20l-6 7H4z M4 25l6-7h14l-6 7z" fill="#a3b8e2" stroke="#4f6db0" /><path d="M14 8v11" stroke="#bd3a34" strokeWidth="2.500" /></SideIcon><Caret /></SideItem>
            <SideItem $h={28}><SideIcon><g opacity=".45"><Bar x={12} y={2} w={4} h={23} /><path d="M18 14l5-3v6zM22 14h4" fill="#bd3a34" stroke="#bd3a34" /></g></SideIcon><Icon w={10} h={2}><path d="M1 1h9" stroke="#888" /></Icon></SideItem>
            <SideItem $h={47}><SideIcon><Bar x={13.500} y={3} w={4} h={22} /><rect x="24" y="3" width="3.500" height="22" stroke="#4f6db0" strokeDasharray="2 1.500" fill="#dbe3f3" /></SideIcon></SideItem>
            <SideItem $h={28}><SideIcon><Bar x={8.500} y={5} w={23} h={4} /><DownArrow y={13} /><Bar x={8.500} y={19} w={10} h={4} /><Bar x={21} y={19} w={10} h={4} /></SideIcon></SideItem>
            <SideItem $h={47}><SideIcon><Bar x={8.500} y={5} w={10} h={4} /><Bar x={21} y={5} w={10} h={4} /><DownArrow y={13} /><Bar x={8.500} y={19} w={23} h={4} /></SideIcon></SideItem>
            <SideItem $h={28}><SideIcon><Bar x={8.500} y={12} w={23} h={4} /><g fill="#b3b3b3" stroke="#777"><rect x="13.500" y="3" width="3" height="22" /><rect x="24" y="3" width="3" height="22" /></g></SideIcon></SideItem>
            <SideItem $h={47}><SideIcon><Bar x={8.500} y={12} w={23} h={4} /><path d="M15.500 9.500l9 9M24.500 9.500l-9 9" stroke="#c2443a" strokeWidth="3" /></SideIcon></SideItem>
            <SideItem $h={27}><SnapLabel>Snap</SnapLabel><Caret /></SideItem>
            <SideItem $h={48}><SideIcon><path d="M8.500 23L16 5.500V23z" fill="#6684c5" stroke="#42609f" /><path d="M19 23v-8l13 8z" fill="#dce6f7" stroke="#5372b5" /><path d="M22 9c6-5 11 2 6 6" stroke="#df923d" strokeWidth="3.500" /><path d="M18 10l6-5v8z" fill="#df923d" /></SideIcon></SideItem>
            <SideItem $h={28}><SideIcon><rect x="12.500" y="3" width="16" height="22" stroke="#37579c" strokeDasharray="3 2" /><Bar x={18.500} y={3} w={4} h={22} /><path d="M10 14h3M28 14h3" stroke="#bd3a34" strokeWidth="1.500" /><path d="M12.500 11l4.500 3-4.500 3zM29 11l-4.500 3 4.500 3z" fill="#bd3a34" /></SideIcon></SideItem>
            <SideItem $h={47}><SideIcon><path d="M1 27L27 1" stroke="#4399c0" strokeWidth="2" /></SideIcon><Caret /></SideItem>
            <SideItem $h={28}><LetterA>A</LetterA></SideItem>
          </SideBar>
          <Canvas />
        </Body>
        <PullTab>
          <Icon w={19} h={62}>
            <path d="M6 26.500l6 4.500-6 4.500z" fill="#fff" />
            {[8, 14, 20, 40, 46, 52].map((y) => <path key={y} d={`M5 ${y}h2M11.500 ${y}h2`} stroke="#a5b1c3" strokeWidth="2" />)}
          </Icon>
        </PullTab>
      </Editor>
      <Side>
        <Pager>
          <PagerLabel>Page:</PagerLabel>
          <PagerButton><Icon w={12} h={12}><path d="M2 1v10M10 1v10M9 1.500L4 6l5 4.500z" stroke="#9aa3bd" strokeWidth="1.500" fill="#b5bfd8" /></Icon></PagerButton>
          <PagerButton><Icon w={12} h={12}><path d="M9 1.500L4 6l5 4.500z" stroke="#9aa3bd" fill="#b5bfd8" /></Icon></PagerButton>
          <PageNo $on>1</PageNo><PageNo>2</PageNo><PageNo>3</PageNo><PageNo>4</PageNo>
        </Pager>
        <Columns>
          <Group $w={429} $h={389} $pad="20px 0 0 8px">
            <GroupTitle $left={8}>Violation Type:</GroupTitle>
            <Tree>
              {nodes.map((n) => (
                <TreeRow key={n.text} $on={n.on}>
                  {n.guides.split("").map((g, i) => <Branch key={i} d={g === "|" ? "M12.500 0v21" : ""} />)}
                  <Branch box={n.box} d={`M12.500 0v${n.down ? 21 : 10.500}M${n.box ? 18 : 12.500} 10.500H24`} />
                  <TreeText>{n.text}</TreeText>
                </TreeRow>
              ))}
            </Tree>
          </Group>
          <VSplit />
          <Group $w={363} $h={389} $pad="20px 0 0 8px" $open>
            <GroupTitle $left={8}>Violation:</GroupTitle>
            <Table>
              <HeaderRow><HeaderCell $w={87}>LAYER</HeaderCell><HeaderCell $w={218}>OBJECT1</HeaderCell></HeaderRow>
              <DataRow>
                <DataCell $w={87}>Metal10(...</DataCell>
                <DataCell $w={218}><span>NET</span><span>VDD</span></DataCell>
                <DataCell $w={80}>INST</DataCell>
              </DataRow>
              <ScrollBar>
                <ScrollButton><Icon w={10} h={12}><path d="M9 1L1 6l8 5z" fill="#fafafa" /><path d="M9 1L1 6" stroke="#999" strokeWidth="1.500" /></Icon></ScrollButton>
                <Thumb><Grip /></Thumb>
              </ScrollBar>
            </Table>
          </Group>
        </Columns>
        <HSplit />
        <Group $h={122} $pad="23px 0 0 13px" $open>
          <GroupTitle $left={4}>Description:</GroupTitle>
          <Report>
            <Wide>Special Wire of Net VDD &amp; Blockage of Cell pad_vdd</Wide>
            <span>Type:</span><span>Metal Short</span>
            <Wide>bbox = (322.995, 7450) (325.995, 7453.36)</Wide>
          </Report>
        </Group>
      </Side>
    </Window>
  );
}
